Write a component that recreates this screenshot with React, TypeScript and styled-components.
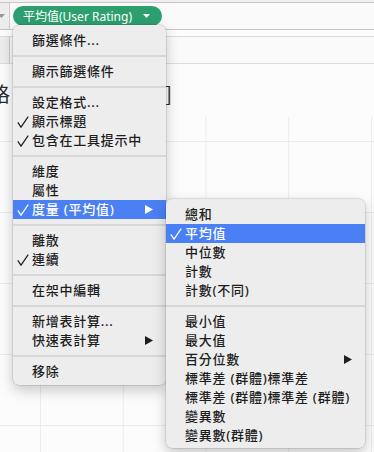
import React from 'react'
import styled, { createGlobalStyle } from 'styled-components'

interface MenuEntry {
  label: string
  checked?: boolean
  active?: boolean
  arrow?: boolean
}

const MainGroups: MenuEntry[][] = [
  [{ label: '篩選條件...' }],
  [{ label: '顯示篩選條件' }],
  [
    { label: '設定格式...' },
    { label: '顯示標題', checked: true },
    { label: '包含在工具提示中', checked: true }
  ],
  [
    { label: '維度' },
    { label: '屬性' },
    { label: '度量 (平均值)', checked: true, active: true, arrow: true }
  ],
  [{ label: '離散' }, { label: '連續', checked: true }],
  [{ label: '在架中編輯' }],
  [{ label: '新增表計算...' }, { label: '快速表計算', arrow: true }],
  [{ label: '移除' }]
]

const SubGroups: MenuEntry[][] = [
  [
    { label: '總和' },
    { label: '平均值', checked: true, active: true },
    { label: '中位數' },
    { label: '計數' },
    { label: '計數(不同)' }
  ],
  [
    { label: '最小值' },
    { label: '最大值' },
    { label: '百分位數', arrow: true },
    { label: '標準差 (群體)標準差' },
    { label: '標準差 (群體)標準差 (群體)' },
    { label: '變異數' },
    { label: '變異數(群體)' }
  ]
]

const Check = () => (
  <svg width="12" height="12" viewBox="0 0 12 12">
    <path
      d="M0.8 6.4 L4 11.2 L11.2 0.6"
      fill="none"
      stroke="currentColor"
      strokeWidth="1.2"
    />
  </svg>
)

const SubArrow = () => (
  <svg width="8" height="9" viewBox="0 0 8 9">
    <polygon points="0,0 8,4.5 0,9" fill="currentColor" />
  </svg>
)

const DownArrow = ({ color }: { color: string }) => (
  <svg width="7" height="4" viewBox="0 0 7 4">
    <polygon points="0,0 7,0 3.5,4" fill={color} />
  </svg>
)

const renderGroups = (groups: MenuEntry[][], sub?: React.ReactNode) =>
  groups.map((group, gi) => (
    <React.Fragment key={gi}>
      {gi > 0 && <Separator />}
      {group.map((item) => (
        <MenuItem key={item.label} $active={item.active}>
          <CheckCell>{item.checked && <Check />}</CheckCell>
          <Label>{item.label}</Label>
          {item.arrow && <SubArrow />}
          {item.active && sub}
        </MenuItem>
      ))}
    </React.Fragment>
  ))

const App = () => {
  return (
    <Page>
      <GlobalStyle />
      <TopStrip />
      <ShelfRow>
        <ShelfLabel>
          <DownArrow color="#9a9a9a" />
        </ShelfLabel>
        <PillWrap>
          <Pill>
            平均值(User Rating)
            <DownArrow color="#ffffff" />
          </Pill>
          <Menu>
            {renderGroups(
              MainGroups,
              <SubMenu>{renderGroups(SubGroups)}</SubMenu>
            )}
          </Menu>
        </PillWrap>
      </ShelfRow>
      <ShelfGap />
      <MarksRow>
        <ShelfLabel />
      </MarksRow>
      <TitleRow>
        <TitleText>格</TitleText>
        <TitleText>]</TitleText>
      </TitleRow>
      <Plot />
    </Page>
  )
}

const GlobalStyle = createGlobalStyle`
  html, body {
    margin: 0;
    padding: 0;
    background: #fcfcfc;
  }
  body {
    font-family: 'Noto Sans', 'Noto Sans CJK TC', sans-serif;
    overflow: hidden;
  }
`

const Page = styled.div`
  position: relative;
  display: flex;
  flex-direction: column;
  width: 374px;
  height: 452px;
  overflow: hidden;
  background: #fcfcfc;
`

const TopStrip = styled.div`
  height: 2px;
  background: #efefef;
  border-bottom: 1px solid #c6c6c6;
`

const ShelfRow = styled.div`
  display: flex;
  align-items: center;
  height: 26px;
  background: #fafafa;
  border-bottom: 1px solid #c6c6c6;
`

const ShelfLabel = styled.div`
  display: flex;
  align-items: center;
  justify-content: flex-start;
  align-self: stretch;
  width: 9px;
  background: #ededed;
  border-right: 1px solid #cdcdcd;
  overflow: hidden;

  svg {
    margin-left: -2px;
  }
`

const ShelfGap = styled.div`
  height: 6px;
`

const MarksRow = styled.div`
  display: flex;
  height: 26px;
  background: #fafafa;
  border-top: 1px solid #dcdcdc;
  border-bottom: 1px solid #dcdcdc;
`

const PillWrap = styled.div`
  position: relative;
  margin-left: 3px;
`

const Pill = styled.div`
  display: flex;
  align-items: center;
  gap: 11px;
  height: 20px;
  padding: 0 12px 0 10px;
  border-radius: 10px;
  background: #2d9f6f;
  color: #ffffff;
  font-size: 12px;
  white-space: nowrap;
`

const TitleRow = styled.div`
  display: flex;
  justify-content: space-between;
  align-items: center;
  width: 182px;
  height: 53px;
  margin-left: -10px;
  padding-top: 6px;
  box-sizing: border-box;
`

const TitleText = styled.span`
  font-family: 'Noto Sans CJK TC', sans-serif;
  font-size: 20px;
  color: #2a2a2a;
`

const Plot = styled.div`
  flex: 1;
  background-image: linear-gradient(to right, #ebebeb 1px, transparent 1px),
    linear-gradient(to bottom, #ebebeb 1px, transparent 1px);
  background-size: 82.75px 71px;
  background-position: 40px 24px;
`

const Menu = styled.div`
  position: absolute;
  top: 19px;
  left: 0;
  z-index: 10;
  width: 153px;
  padding: 6px 0 4px;
  background: #ededed;
  border-radius: 6px;
  box-shadow: 0 0 0 0.5px rgba(0, 0, 0, 0.18), 0 5px 14px rgba(0, 0, 0, 0.22);
`

const SubMenu = styled(Menu)`
  top: -1px;
  left: 100%;
  width: 199px;
  padding: 6px 0 3px;
`

const MenuItem = styled.div<{ $active?: boolean }>`
  position: relative;
  display: flex;
  align-items: center;
  height: 19px;
  padding-right: 13px;
  background: ${(p) => (p.$active ? '#4b80f4' : 'transparent')};
  color: ${(p) => (p.$active ? '#ffffff' : '#1e1e1e')};
  font-size: 13px;
  font-weight: 500;
  letter-spacing: 0.75px;
  white-space: nowrap;
`

const CheckCell = styled.div`
  display: flex;
  justify-content: center;
  width: 19px;
  flex-shrink: 0;
`

const Label = styled.span`
  flex: 1;
  line-height: 19px;
`

const Separator = styled.div`
  height: 2px;
  margin: 5px 0;
  background: #d7d7d7;
`

export default App
